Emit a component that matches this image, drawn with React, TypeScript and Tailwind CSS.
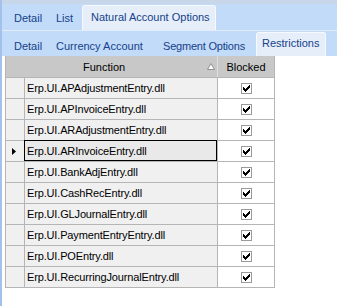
import React from "react";

const rows = [
  "Erp.UI.APAdjustmentEntry.dll",
  "Erp.UI.APInvoiceEntry.dll",
  "Erp.UI.ARAdjustmentEntry.dll",
  "Erp.UI.ARInvoiceEntry.dll",
  "Erp.UI.BankAdjEntry.dll",
  "Erp.UI.CashRecEntry.dll",
  "Erp.UI.GLJournalEntry.dll",
  "Erp.UI.PaymentEntryEntry.dll",
  "Erp.UI.POEntry.dll",
  "Erp.UI.RecurringJournalEntry.dll",
];

const SELECTED = 3;

function Check() {
  return (
    <svg width="11" height="11" viewBox="0 0 11 11" shapeRendering="crispEdges">
      <rect x="0.5" y="0.5" width="10" height="10" fill="#fff" stroke="#9a9a9a" />
      <g fill="#000" transform="translate(2 2)">
        <rect x="6" y="0" width="1" height="1" />
        <rect x="5" y="1" width="2" height="1" />
        <rect x="0" y="2" width="1" height="1" />
        <rect x="4" y="2" width="3" height="1" />
        <rect x="0" y="3" width="2" height="1" />
        <rect x="3" y="3" width="3" height="1" />
        <rect x="0" y="4" width="5" height="1" />
        <rect x="1" y="5" width="3" height="1" />
        <rect x="2" y="6" width="1" height="1" />
      </g>
    </svg>
  );
}

export default function App() {
  return (
    <div className="w-[337px] h-[306px] flex bg-white overflow-hidden font-['Liberation_Sans',Arial,sans-serif] text-[11px] leading-[13px]">
      <div className="w-[2px] bg-[#a3c1ea]" />
      <div className="flex-1 flex flex-col">
        <div className="h-[4px] bg-[#c8d6ea]" />
        {/* first tab row */}
        <div className="h-[26px] bg-[#c2dbf8] flex items-start pl-[12px] text-[#15428b]">
          <span className="w-[42px] pt-[8px]">Detail</span>
          <span className="w-[26px] pt-[8px]">List</span>
          <div className="mt-[1px] h-[25px] w-[134px] bg-[#e6eefa] rounded-t-[3px] border border-b-0 border-[#f6f9fe] pl-[8px] pt-[5px]">
            Natural Account Options
          </div>
        </div>
        <div className="h-[1px] bg-[#e3ecf9]" />
        {/* second tab row */}
        <div className="h-[25px] bg-[#c2dbf8] flex items-start pl-[12px] text-[#15428b]">
          <span className="w-[42px] pt-[9px]">Detail</span>
          <span className="w-[107px] pt-[9px]">Currency Account</span>
          <span className="w-[93px] pt-[9px] tracking-[-0.2px]">Segment Options</span>
          <div className="mt-[1px] h-[24px] w-[70px] bg-[#e6eefa] rounded-t-[3px] border border-b-0 border-[#f6f9fe] pl-[5px] pt-[4px]">
            Restrictions
          </div>
        </div>
        {/* content */}
        <div className="flex-1 bg-white pl-[3px]">
          <div className="w-[270px] border-l border-[#b5b5b5] text-black">
            <div className="h-[22px] flex bg-[#c8c8c8] border-b border-[#b5b5b5]">
              <div className="w-[19px]" />
              <div className="w-[193px] border-r border-[#dedede] flex items-center pt-[1px]">
                <span className="pl-[58px]">Function</span>
                <svg className="ml-auto mr-[2px] mb-[2px]" width="8" height="7" viewBox="0 0 8 7">
                  <polygon points="4,0.5 7.5,6.5 0.5,6.5" fill="#fff" stroke="#909090" strokeWidth="1" />
                </svg>
              </div>
              <div className="w-[57px] border-r border-[#b5b5b5] flex items-center justify-center pt-[1px]">
                Blocked
              </div>
            </div>
            {rows.map((r, i) => (
              <div key={r} className="h-[21px] flex">
                <div className="w-[19px] bg-[#f0f0f0] border-r border-b border-[#b5b5b5] flex items-center pl-[6px]">
                  {i === SELECTED && (
                    <svg width="4" height="7" viewBox="0 0 4 7">
                      <polygon points="0,0 4,3.5 0,7" fill="#000" />
                    </svg>
                  )}
                </div>
                <div
                  className={
                    i === SELECTED
                      ? "relative w-[193px] bg-[#e9e9e9] border-r border-b border-[#b5b5b5] flex items-center pl-[2px]"
                      : "w-[193px] bg-[#f0f0f0] border-r border-b border-[#b5b5b5] flex items-center pl-[2px]"
                  }
                >
                  <span className="tracking-[-0.15px]">{r}</span>
                  {i === SELECTED && (
                    <div className="absolute -left-px -top-px right-0 bottom-0 border border-black pointer-events-none" />
                  )}
                </div>
                <div className="w-[57px] bg-white border-r border-b border-[#b5b5b5] flex items-center justify-center">
                  <Check />
                </div>
              </div>
            ))}
          </div>
        </div>
      </div>
    </div>
  );
}
